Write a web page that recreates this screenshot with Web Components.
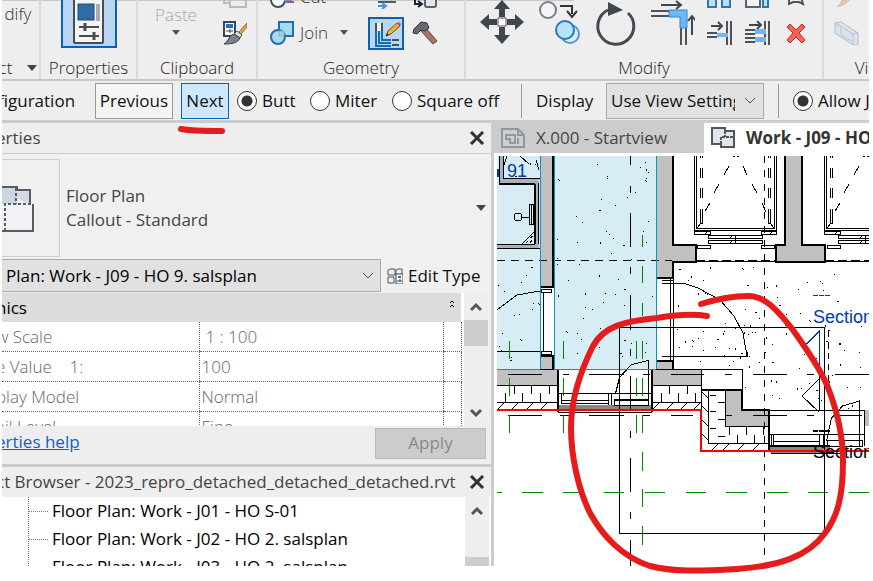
<!DOCTYPE html>
<html lang="en">
<head>
<meta charset="utf-8">
<title>Floor plan editor</title>
<style>
  body {
    margin: 0;
    background: #fff;
    color: #111;
    font-family: "Open Sans", "Noto Sans", sans-serif;
    font-size: 17px;
    line-height: 24px;
  }
</style>
</head>
<body>
<plan-app></plan-app>

<script>
const ICONS = {
  properties: [56, 48, `
    <rect x="1" y="-6" width="54" height="53" fill="#b9d6f3" stroke="#0a62b8" stroke-width="2"/>
    <rect x="13" y="-4" width="29" height="47" rx="1" fill="#f4f4f4" stroke="#474c52" stroke-width="2"/>
    <rect x="17" y="4" width="16" height="16" fill="#2e6ca8" stroke="#1d4c7f"/>
    <rect x="35" y="4" width="4" height="17" fill="#a9abb0"/>
    <path d="M18 27h20M18 36h20" stroke="#474c52" stroke-width="2"/>
    <path d="M24 23v8M33 32v8" stroke="#474c52" stroke-width="3"/>`],
  caret: [12, 8, `<path d="M1 1h10L6 7z" fill="#444"/>`],
  smallCaret: [8, 6, `<path d="M0 0h8L4 5z" fill="#555"/>`],
  clipCopy: [24, 24, `
    <path d="M1 1v17h6M7 5h16v17H7z" fill="none" stroke="#bbb" stroke-width="2"/>`],
  brush: [24, 24, `
    <rect x="1" y="1" width="11" height="14" fill="#fff" stroke="#33485f" stroke-width="2"/>
    <rect x="3" y="3" width="7" height="4" fill="#2a6db3"/>
    <path d="M3 10h7M7 8v4" stroke="#33485f"/>
    <path d="M24 2l-8 9 2 2 6-7z" fill="#e8a73c" stroke="#8a6a36"/>
    <path d="M14 10l5 4-2 3-6-4z" fill="#ddd" stroke="#555"/>
    <path d="M11 13l6 4c-2 5-8 6-16 6 5-3 5-9 10-10z" fill="#7b828b" stroke="#3d4248"/>`],
  cut: [24, 24, `
    <circle cx="8" cy="15" r="7" fill="#fff" stroke="#454c55" stroke-width="2"/>
    <path d="M16 17h8" stroke="#cf4949" stroke-width="2"/>
    <path d="M14 15h8" stroke="#4a9be6" stroke-width="2"/>`],
  join: [24, 24, `
    <rect x="9" y="1" width="14" height="14" fill="#a9d9ef" stroke="#1f6fb3" stroke-width="2"/>
    <circle cx="8" cy="16" r="7" fill="#a9d9ef" stroke="#1f6fb3" stroke-width="2"/>
    <path d="M9 10h5v5H9z" fill="#9fd0e6" stroke="#7eb4cf"/>`],
  wallTop: [24, 24, `
    <path d="M4 17h18" stroke="#525a63" stroke-width="2"/>
    <path d="M4 21h7M8 18l4 3-4 3" fill="none" stroke="#3d96ea" stroke-width="2"/>`],
  wallJoin: [36, 33, `
    <rect x="1" y="1" width="34" height="31" fill="#b9d6f3" stroke="#0a62b8" stroke-width="2"/>
    <path d="M8 6v8M14 6v8M24 23h7M24 28h7" stroke="#47515c" stroke-width="2"/>
    <path d="M9 6h4v8H9z" fill="#eee"/>
    <path d="M8 14v15h15M11 14v12h12M14 14v9h9" fill="none" stroke="#176bb8" stroke-width="2"/>
    <path d="M18 19l2-5 9-8 3 3-9 8z" fill="#f2ae32" stroke="#7c5318"/>
    <path d="M29 6l2-1 2 2-1 2z" fill="#ca595c"/>
    <path d="M18 19l1-3 2 2z" fill="#333"/>`],
  splitTop: [24, 24, `
    <rect x="12" y="8" width="11" height="14" rx="2" fill="#e0e8f0" stroke="#5a6470" stroke-width="2"/>
    <path d="M2 12v7h6M5 16l4 3-4 3" fill="none" stroke="#222" stroke-width="2"/>`],
  hammer: [26, 24, `
    <path d="M9 10l4-4 12 14-4 3z" fill="#a87466" stroke="#6b4339"/>
    <path d="M2 8l7-7 6 1 2 5-4 3-4-1-4 4-4-1z" fill="#646b73" stroke="#33383e"/>`],
  move: [46, 48, `
    <path d="M23 1l8 9h-5v8h-6v-8h-5zM23 45l8-9h-5v-8h-6v8h-5zM1 23l9-8v5h8v6h-8v5zM45 23l-9-8v5h-8v6h8v5z" fill="#3f464e"/>
    <rect x="19" y="19" width="8" height="8" fill="#fff" stroke="#555"/>`],
  copy: [44, 48, `
    <circle cx="11" cy="11" r="8" fill="#f5f5f8" stroke="#777f88" stroke-width="2"/>
    <path d="M23 7h12v8M30 12l5 6 5-6" fill="none" stroke="#30363c" stroke-width="2"/>
    <circle cx="33" cy="35" r="9" fill="#d7effb" stroke="#5594cf" stroke-width="2"/>
    <circle cx="28" cy="31" r="9" fill="#b8e2f7" stroke="#2877bb" stroke-width="2"/>`],
  rotate: [44, 48, `
    <path d="M35 14A18 18 0 1 1 15 11" fill="none" stroke="#454b52" stroke-width="3"/>
    <path d="M15 3l15 8-15 6z" fill="#3f464e"/>`],
  trim: [46, 48, `
    <path d="M12 6h20M27 2l5 4-5 4" fill="none" stroke="#3f464e" stroke-width="2"/>
    <path d="M2 12h18M2 17h18M32 29v17M37 29v17" stroke="#4b525a" stroke-width="2"/>
    <path d="M20 11h18v18h-7V18H20z" fill="#6db7f5" stroke="#3586cf"/>
    <path d="M43 36V17M39 22l4-5 4 5" fill="none" stroke="#3f464e" stroke-width="2"/>`],
  alignA: [26, 24, `
    <path d="M1 4h8v18H1zM15 4h8v18h-8z" fill="#bfe1f7" stroke="#2779bd" stroke-width="2"/>`],
  alignB: [26, 24, `
    <path d="M1 4h14v18H1z" fill="#eef2f6" stroke="#586572" stroke-width="2"/>
    <path d="M18 4h5v18h-5z" fill="#bfe1f7" stroke="#2779bd" stroke-width="2"/>`],
  pin: [26, 24, `<path d="M6 12v7l4-2h6l4 2-2-7" fill="none" stroke="#555" stroke-width="2"/>`],
  trimOne: [26, 24, `
    <path d="M4 5h11M11 1l4 4-4 4" fill="none" stroke="#3f464e" stroke-width="2"/>
    <path d="M0 12h10M0 16h10M20 0v24M24 0v24" stroke="#4b525a" stroke-width="2"/>
    <path d="M10 12h11v4H10z" fill="#6db7f5"/>`],
  trimMany: [26, 24, `
    <path d="M4 4h12M12 0l4 4-4 4" fill="none" stroke="#3f464e" stroke-width="2"/>
    <path d="M0 9h10M0 13h10M0 17h10M0 21h10M20 0v24M24 0v24" stroke="#4b525a" stroke-width="2"/>
    <path d="M10 8h11v5H10zM10 16h11v5H10z" fill="#6db7f5"/>`],
  remove: [26, 24, `
    <path d="M4 6l3-3 6 6 6-6 3 3-6 6 6 7-3 3-6-6-6 6-3-3 6-7z" fill="#ff6056" stroke="#b92b27"/>`],
  paintTop: [26, 24, `<path d="M2 22c7 0 13-4 15-10h-8c-2 4-3 7-7 10z" fill="#d8c5b4"/>`],
  box: [26, 24, `
    <path d="M1 2l6-1 17 11v11l-5 1L1 12z" fill="#dce4ea" stroke="#b5bcc2"/>
    <path d="M1 2l18 11v11M19 13l5-1M7 6v8l10 6" fill="none" stroke="#a9c3dc"/>`],
  close: [16, 14, `<path d="M2 1l12 12M14 1L2 13" stroke="#333" stroke-width="3"/>`],
  floorPlan: [36, 48, `
    <path d="M-4 3h19v3h13v15" fill="#d5dbe3" stroke="#555d66" stroke-width="2"/>
    <path d="M-4 4h18v16H-4z" fill="#ccd5df"/>
    <path d="M3 20h28v27H3z" fill="#f0f2f5"/>
    <path d="M31 20v27H-2" fill="none" stroke="#555d66" stroke-width="2"/>
    <path d="M14 4v16M3 47V20h28" fill="none" stroke="#555d66" stroke-width="2" stroke-dasharray="3 2"/>`],
  editType: [16, 16, `
    <path d="M1 2l2-1h5v6H1zM9 2l2-1h4v6H9zM1 9h6v6H1z" fill="#eee" stroke="#555"/>
    <rect x="9" y="6" width="7" height="10" fill="#fff" stroke="#33485f"/>
    <rect x="11" y="8" width="3" height="2" fill="#2a6db3"/>
    <path d="M10 13h5M13 11v3" stroke="#33485f"/>`],
  chevron: [12, 8, `<path d="M1 1l5 5 5-5" fill="none" stroke="#555"/>`],
  up: [12, 10, `<path d="M1 8l5-5 5 5" fill="none" stroke="#555" stroke-width="3"/>`],
  down: [12, 10, `<path d="M1 2l5 5 5-5" fill="none" stroke="#555" stroke-width="3"/>`],
  collapse: [6, 8, `<path d="M1 3l2-2 2 2M1 7l2-2 2 2" fill="none" stroke="#000"/>`],
  sheet: [24, 20, `
    <path d="M1 1h16l6 6v12H1z" fill="#ccd0d3" stroke="#92989c" stroke-width="2"/>
    <path d="M17 1v6h6M5 7h9v8h-5v-4H5zM17 10v6" fill="none" stroke="#92989c" stroke-width="2"/>`],
  planTab: [24, 22, `
    <path d="M1 1h13v3h9v16H10v-3H1z" fill="#e2e5e9" stroke="#50565d" stroke-width="2"/>
    <path d="M10 17v-7h13M14 4v6" fill="none" stroke="#50565d" stroke-width="2" stroke-dasharray="3 1"/>`],
};

class AppIcon extends HTMLElement {
  connectedCallback() {
    const [w, h, body] = ICONS[this.getAttribute('name')];
    this.attachShadow({ mode: 'open' }).innerHTML = `
      <style>
        :host { display: inline-flex; flex: none; }
        svg { display: block; }
      </style>
      <svg width="${w}" height="${h}" viewBox="0 0 ${w} ${h}" aria-hidden="true">${body}</svg>`;
  }
}

class RibbonPanel extends HTMLElement {
  connectedCallback() {
    this.attachShadow({ mode: 'open' }).innerHTML = `
      <style>
        :host {
          display: flex;
          flex-direction: column;
          box-sizing: border-box;
          border-right: 2px solid #dadada;
          overflow: hidden;
          font-weight: 300;
        }
        :host(:last-child) { border-right: 0; }
        .tools {
          display: flex;
          justify-content: center;
          align-items: flex-end;
          height: 51px;
          flex: none;
        }
        .title {
          padding-top: 5px;
          height: 23px;
          line-height: 23px;
          text-align: center;
          white-space: nowrap;
          color: #222;
        }
      </style>
      <div class="tools"><slot></slot></div>
      <div class="title"><slot name="title"></slot></div>`;
  }
}

class RibbonBar extends HTMLElement {
  connectedCallback() {
    this.attachShadow({ mode: 'open' }).innerHTML = `
      <style>
        :host {
          display: grid;
          grid-template-columns: 39px 97px 120px 208px 358px 1fr;
          background: linear-gradient(#c8c8c8, #c8c8c8) 0 0 / 66% 1px no-repeat #eee;
          border-bottom: 2px solid #c8c8c8;
          overflow: hidden;
        }
        button {
          display: flex;
          align-items: center;
          padding: 0;
          border: 0;
          background: none;
          font: inherit;
          color: #333;
          line-height: 20px;
        }
        .stack { display: flex; flex-direction: column; justify-content: flex-end; }
        .stack > * { height: 36px; }
        .row { display: flex; align-items: center; }
        .wide { width: 90px; gap: 6px; }
        .drop { margin-left: 6px; }
        .first { align-self: flex-start; width: 32px; margin-top: 4px; }
        .big { height: 48px; margin-bottom: 3px; }
        .modify .big { margin-bottom: 4px; }
        .paste { align-self: flex-end; flex-direction: column; color: #aaa; gap: 5px; margin-bottom: 15px; }
        .clip { gap: 26px; padding-left: 8px; }
        .modify { gap: 12px; display: flex; align-items: flex-end; }
        .small { display: grid; grid-template-columns: repeat(3, 26px); grid-auto-rows: 36px; column-gap: 12px; }
        .title-row { display: inline-flex; align-items: center; gap: 14px; text-indent: -4px; }
        .geo { gap: 8px; padding-right: 14px; }
        .cell { width: 36px; justify-content: center; }
        .geo .cell:last-child { width: 26px; }
        .view { padding-left: 30px; }
      </style>
      <ribbon-panel>
        <button class="first">dify</button>
        <span slot="title" class="title-row">ct <app-icon name="caret"></app-icon></span>
      </ribbon-panel>
      <ribbon-panel>
        <button class="big" aria-label="Properties"><app-icon name="properties"></app-icon></button>
        <span slot="title">Properties</span>
      </ribbon-panel>
      <ribbon-panel>
        <div class="row clip">
          <button class="paste">Paste <app-icon name="smallCaret"></app-icon></button>
          <div class="stack">
            <button aria-label="Copy to clipboard"><app-icon name="clipCopy"></app-icon></button>
            <button aria-label="Match type"><app-icon name="brush"></app-icon></button>
          </div>
        </div>
        <span slot="title">Clipboard</span>
      </ribbon-panel>
      <ribbon-panel>
        <div class="stack">
          <div class="row geo">
            <button class="wide"><app-icon name="cut"></app-icon> Cut</button>
            <button class="cell" aria-label="Wall opening"><app-icon name="wallTop"></app-icon></button>
            <button class="cell" aria-label="Split"><app-icon name="splitTop"></app-icon></button>
          </div>
          <div class="row geo">
            <button class="wide"><app-icon name="join"></app-icon> Join <app-icon class="drop" name="smallCaret"></app-icon></button>
            <button class="cell" aria-label="Wall joins"><app-icon name="wallJoin"></app-icon></button>
            <button class="cell" aria-label="Demolish"><app-icon name="hammer"></app-icon></button>
          </div>
        </div>
        <span slot="title">Geometry</span>
      </ribbon-panel>
      <ribbon-panel>
        <div class="modify">
          <button class="big" aria-label="Move"><app-icon name="move"></app-icon></button>
          <button class="big" aria-label="Copy"><app-icon name="copy"></app-icon></button>
          <button class="big" aria-label="Rotate"><app-icon name="rotate"></app-icon></button>
          <button class="big" aria-label="Trim to corner"><app-icon name="trim"></app-icon></button>
          <div class="small">
            <button aria-label="Mirror"><app-icon name="alignA"></app-icon></button>
            <button aria-label="Array"><app-icon name="alignB"></app-icon></button>
            <button aria-label="Pin"><app-icon name="pin"></app-icon></button>
            <button aria-label="Trim single"><app-icon name="trimOne"></app-icon></button>
            <button aria-label="Trim multiple"><app-icon name="trimMany"></app-icon></button>
            <button aria-label="Delete"><app-icon name="remove"></app-icon></button>
          </div>
        </div>
        <span slot="title">Modify</span>
      </ribbon-panel>
      <ribbon-panel>
        <div class="stack">
          <button aria-label="Paint"><app-icon name="paintTop"></app-icon></button>
          <button aria-label="Section box"><app-icon name="box"></app-icon></button>
        </div>
        <span slot="title" class="view">Vi</span>
      </ribbon-panel>`;
  }
}

class OptionsBar extends HTMLElement {
  connectedCallback() {
    this.attachShadow({ mode: 'open' }).innerHTML = `
      <style>
        :host {
          display: flex;
          align-items: center;
          height: 39px;
          background: #eee;
          border-bottom: 3px solid #ccc;
          white-space: nowrap;
          overflow: hidden;
        }
        .config { width: 93px; flex: none; text-indent: -4px; }
        button {
          height: 36px;
          padding: 0;
          font: inherit;
          background: #f5f5f5;
          border: 1px solid #999;
          color: #111;
        }
        .prev { width: 78px; margin-right: 8px; flex: none; }
        .next { width: 48px; margin-right: 8px; flex: none; background: #cce8fb; border-color: #0a62b8; }
        label { display: flex; align-items: center; gap: 5px; flex: none; }
        .butt { width: 73px; }
        .miter { width: 82px; }
        .square { width: 129px; }
        input {
          appearance: none;
          box-sizing: border-box;
          width: 20px;
          height: 20px;
          margin: 0;
          flex: none;
          border: 1px solid #333;
          border-radius: 50%;
          background: #fff;
        }
        input:checked { background: radial-gradient(circle, #333 5px, #fff 6px); }
        .rule { width: 1px; height: 34px; background: #999; margin-right: 14px; flex: none; }
        .display { width: 70px; }
        .combo { position: relative; width: 158px; margin-right: 14px; flex: none; }
        select {
          appearance: none;
          width: 158px;
          height: 36px;
          padding: 0 28px 0 4px;
          border: 1px solid #aaa;
          border-radius: 0;
          background: #e1e1e1;
          color: #111;
          font: inherit;
        }
        .combo app-icon { position: absolute; right: 8px; top: 14px; pointer-events: none; }
      </style>
      <span class="config">figuration</span>
      <button class="prev">Previous</button>
      <button class="next">Next</button>
      <label class="butt"><input type="radio" name="end" checked>Butt</label>
      <label class="miter"><input type="radio" name="end">Miter</label>
      <label class="square"><input type="radio" name="end">Square off</label>
      <span class="rule"></span>
      <label class="display" for="display">Display</label>
      <span class="combo">
        <select id="display"><option>Use View Settings</option></select>
        <app-icon name="chevron"></app-icon>
      </span>
      <span class="rule"></span>
      <label><input type="radio" name="allow" checked>Allow J</label>`;
  }
}

class PanelHeader extends HTMLElement {
  connectedCallback() {
    this.attachShadow({ mode: 'open' }).innerHTML = `
      <style>
        :host {
          display: flex;
          align-items: center;
          justify-content: space-between;
          height: 30px;
          padding-right: 6px;
          background: #eee;
          color: #444;
          white-space: nowrap;
          text-indent: -6px;
        }
        button { padding: 0; border: 0; background: none; display: flex; }
      </style>
      <slot></slot>
      <button aria-label="Close"><app-icon name="close"></app-icon></button>`;
  }
}

class ScrollStrip extends HTMLElement {
  connectedCallback() {
    this.attachShadow({ mode: 'open' }).innerHTML = `
      <style>
        :host {
          display: flex;
          flex-direction: column;
          align-items: center;
          width: 24px;
          background: #eee;
          flex: none;
        }
        app-icon { height: 10px; padding: 9px 0 8px; }
        .thumb { width: 24px; height: 26px; background: #cdcdcd; }
        .space { flex: 1; }
        :host([low]) .thumb { order: 3; height: 9px; }
        :host([low]) .down { display: none; }
      </style>
      <app-icon name="up"></app-icon>
      <div class="thumb"></div>
      <div class="space"></div>
      <app-icon class="down" name="down"></app-icon>`;
  }
}

class PropertiesPanel extends HTMLElement {
  connectedCallback() {
    this.attachShadow({ mode: 'open' }).innerHTML = `
      <style>
        :host { display: block; background: #f0f0f0; }
        .type {
          display: flex;
          align-items: center;
          height: 100px;
          padding-top: 4px;
          border-top: 1px solid #ccc;
          color: #444;
        }
        .thumb {
          display: flex;
          align-items: center;
          width: 57px;
          height: 96px;
          border: 1px solid #ccc;
          border-left: 0;
          margin-right: 6px;
        }
        .type p { margin: 0; flex: 1; }
        .type > button { margin-right: 4px; }
        button { padding: 0; border: 0; background: none; font: inherit; color: #111; display: flex; align-items: center; }
        .filter { display: flex; align-items: center; height: 35px; white-space: nowrap; }
        .combo { position: relative; width: 379px; flex: none; }
        select {
          appearance: none;
          display: block;
          width: 100%;
          height: 33px;
          border: 1px solid #aaa;
          border-left: 0;
          border-radius: 0;
          background: #e1e1e1;
          color: #000;
          padding: 0 4px;
          font: inherit;
        }
        .combo app-icon { position: absolute; right: 7px; top: 13px; pointer-events: none; }
        .edit { gap: 5px; margin-left: 6px; }
        .grid { display: flex; height: 133px; overflow: hidden; padding-right: 3px; }
        .scroller { flex: 1; overflow: hidden; background: #fff; }
        table { width: 459px; border-collapse: collapse; table-layout: fixed; color: #666; font-weight: 300; }
        th, td { height: 29px; padding: 0 2px; text-align: left; font-weight: inherit; border-bottom: 1px dotted #666; line-height: 20px; }
        td { border-left: 1px dotted #666; }
        th { padding-left: 0; text-indent: -6px; }
        td:last-child { border-right: 1px dotted #666; }
        thead th { background: #dcdcdc; color: #000; font-weight: 400; border: 0; height: 29px; }
        thead div { display: flex; justify-content: space-between; padding-right: 4px; }
        thead app-icon { margin-top: 2px; }
        td.indent { padding-left: 6px; }
        .foot { display: flex; align-items: center; justify-content: space-between; height: 38px; padding-right: 5px; background: #eee; }
        a { color: #0a62cc; margin-bottom: 6px; text-indent: -6px; }
        .apply { width: 111px; height: 31px; margin-bottom: 4px; justify-content: center; border: 1px solid #bbb; background: #ccc; color: #888; }
      </style>
      <panel-header>erties</panel-header>
      <div class="type">
        <span class="thumb"><app-icon name="floorPlan"></app-icon></span>
        <p>Floor Plan<br>Callout - Standard</p>
        <button aria-label="Choose type"><app-icon name="caret"></app-icon></button>
      </div>
      <div class="filter">
        <span class="combo">
          <select aria-label="View"><option>Plan: Work - J09 - HO 9. salsplan</option></select>
          <app-icon name="chevron"></app-icon>
        </span>
        <button class="edit"><app-icon name="editType"></app-icon>Edit Type</button>
      </div>
      <div class="grid">
        <div class="scroller">
          <table>
            <colgroup><col style="width: 197px"><col style="width: 244px"><col style="width: 18px"></colgroup>
            <thead><tr><th colspan="3"><div>nics <app-icon name="collapse"></app-icon></div></th></tr></thead>
            <tbody>
              <tr><th>w Scale</th><td class="indent">1 : 100</td><td></td></tr>
              <tr><th>e Value &nbsp;&nbsp; 1:</th><td>100</td><td></td></tr>
              <tr><th>play Model</th><td>Normal</td><td></td></tr>
              <tr><th>ail Level</th><td>Fine</td><td></td></tr>
            </tbody>
          </table>
        </div>
        <scroll-strip></scroll-strip>
      </div>
      <div class="foot">
        <a href="#help">erties help</a>
        <button class="apply" disabled>Apply</button>
      </div>`;
  }
}

class ProjectBrowser extends HTMLElement {
  connectedCallback() {
    this.attachShadow({ mode: 'open' }).innerHTML = `
      <style>
        :host { display: block; border-top: 3px solid #ccc; }
        .view { display: flex; height: 69px; overflow: hidden; background: #fff; padding-right: 2px; }
        ul { flex: 1; margin: 0 0 0 26px; padding: 0; list-style: none; border-left: 1px dotted #777; color: #000; }
        li { display: flex; align-items: center; gap: 4px; height: 28px; white-space: nowrap; }
        li::before { content: ""; width: 19px; border-top: 1px dotted #777; }
      </style>
      <panel-header>ct Browser - 2023_repro_detached_detached_detached.rvt</panel-header>
      <div class="view">
        <ul>
          <li>Floor Plan: Work - J01 - HO S-01</li>
          <li>Floor Plan: Work - J02 - HO 2. salsplan</li>
          <li>Floor Plan: Work - J03 - HO 2. salsplan</li>
        </ul>
        <scroll-strip low></scroll-strip>
      </div>`;
  }
}

class ViewTabs extends HTMLElement {
  connectedCallback() {
    this.attachShadow({ mode: 'open' }).innerHTML = `
      <style>
        :host { display: flex; height: 30px; background: #ccc; overflow: hidden; }
        button {
          display: flex;
          align-items: center;
          gap: 11px;
          flex: none;
          padding: 0 7px;
          border: 0;
          background: none;
          color: #444;
          font: inherit;
          white-space: nowrap;
        }
        .idle { width: 210px; }
        .active { background: #fff; color: #333; font-weight: 700; width: 300px; }
      </style>
      <button class="idle"><app-icon name="sheet"></app-icon>X.000 - Startview</button>
      <button class="active"><app-icon name="planTab"></app-icon>Work - J09 - HO</button>`;
  }
}

class PlanCanvas extends HTMLElement {
  // concrete/floor speckle, seeded so it is the same each time
  speckle(x, y, w, h, count) {
    let seed = x * 31 + y;
    const next = () => (seed = (seed * 16807) % 2147483647) / 2147483647;
    let d = '';
    next();
    for (let i = 0; i < count; i++) {
      const px = Math.round(x + next() * w);
      const py = Math.round(y + next() * h);
      const dx = Math.round(next() * 3) - 1;
      const dy = Math.round(next() * 2);
      d += `M${px} ${py}l${dx || 1} ${dy}`;
    }
    return d;
  }

  // vertical or horizontal broken line from explicit start/end pairs
  dashes(axis, at, pairs) {
    return pairs.map(([a, b]) => axis === 'v' ? `M${at} ${a}V${b}` : `M${a} ${at}H${b}`).join('');
  }

  lift() {
    return `
      <path d="M694.5 156V230.5H776.5V156M696.5 156V228H774.5V156"/>
      <path d="M700.5 156v2M702.5 156v2M768.5 156v2M770.5 156v2M700.5 168v10M702.5 168v10M700.5 188v10M702.5 188v10M700.5 209v14h2v-14M768.5 168v10M770.5 168v10M768.5 188v10M770.5 188v10M768.5 209v14h2v-14M697 228l4-5M774 228l-4-5"/>
      <path d="M729 166l-5 9M719 184l-5 9M710 203l-5 8M743 166l4 9M752 184l5 9M762 203l4 9M733 157l2-1M739 157l-2-1"/>
      <path d="M694.5 231.5h16v3h-16zM761.5 231.5h15v3h-15zM708.5 235.5h54v3h-54zM708.5 240.5h54v3h-54zM735.5 235v8M697.5 245.5h13v3h-13zM761.5 245.5h13v3h-13zM705 234l3-3M770 234l3-3M730 238l3-3M730 243l3-3"/>`;
  }

  connectedCallback() {
    const vGreen = [[341, 359], [378, 396], [415, 433]];
    this.attachShadow({ mode: 'open' }).innerHTML = `
      <style>
        :host { display: block; padding: 3px 0 0 3px; background: #fff; overflow: hidden; }
        svg { display: block; width: 100%; height: 410px; }
        text { font: 18px "Liberation Sans", Arial, sans-serif; }
      </style>
      <svg viewBox="497 156 372 410" preserveAspectRatio="xMinYMin slice" shape-rendering="crispEdges" fill="none" stroke="#000">
        <g stroke="none">
          <path d="M497 156h159v213H497z" fill="#d7edf6"/>
          <path d="M541 288h13v68h-13z" fill="#fff"/>
          <path d="M499 156h5v23h35v69h-42v-4h38v-60h-36z" fill="#a3b5ba"/>
          <g fill="#c0c0c0">
            <path d="M541 156h13v130h-13zM541 356h13v13h-13zM657 156h16v89h23v17h-23v16h-16zM657 361h16v8h-16z"/>
            <path d="M785 156h17v89h23v17h-49v-17h9zM497 370h61v15h-61zM652 370h49v15h-49zM726 390h16v20h27v16h-43zM864 410h5v16h-5z"/>
          </g>
          <path d="M558 405h94v6h-94zM770 446h60v7h-60z" fill="#888"/>
        </g>

        <path d="${this.speckle(556, 160, 98, 204, 60)}${this.speckle(498, 264, 40, 100, 16)}${this.speckle(676, 265, 190, 95, 76)}${this.speckle(745, 360, 122, 48, 26)}${this.speckle(676, 345, 60, 20, 6)}${this.speckle(508, 158, 30, 18, 5)}"/>

        <!-- bathroom and left door -->
        <path d="M499.5 156v27.5h35V244.5H497M503.5 156v22.5H540M497 248.5h43M538.5 183v61"/>
        <path d="M534.5 184v60M499 183.5h36" stroke-width="2"/>
        <circle cx="518" cy="217" r="4"/>
        <path d="M522 217h8M529.5 204.5h4v20h-4zM531.5 204v20M522 244l12-12M526 243l2-2M530 243l2-3M530 238l3-2M507 156l-3 9M520 156l9 8M536 160l3 10"/>
        <path d="M497 310l20-15 23-4M497 351.5h44M541 289.5h10v3h-10zM543.5 292v59M541 351.5h10v3h-10z"/>
        <path d="M540 287h14M553 156v131M540 356h14M553 356v13" stroke-width="2"/>

        <!-- shaft walls and lifts -->
        <path d="M673 156v89h23v17h-23v16h-17M785 156v89h-9v17h49v-17h-23v-89M656 361h17v8M742 390v20h27v40M701 390h41M558 369v43M652 369v43" stroke-width="2"/>
        ${this.lift()}
        <g transform="translate(130 0)">${this.lift()}</g>
        <path d="M696 260.5h80M825 260.5h44" stroke-dasharray="9 4"/>
        <path d="M673 261.5h196"/>
        <path d="M497 260.5h175" stroke-dasharray="8 6"/>
        <path d="M662 280.5h11M662 283.5h18M670.5 279v82M673.5 279v82M662 356.5h85v-5M671 283l12 0 15 5 22 12 14 16 9 17 4 23"/>

        <!-- lower facade -->
        <path d="M497 385.5h61M652 385.5h49M497 402.5h61M652 402.5h49M497 369.5h61M656 369.5h86v21M701.5 369v42M708.5 390v53M725.5 390v36M708 443.5h61M725 426.5h44"/>
        <path d="M505.5 393v9M514.5 386v8M522.5 393v9M531.5 386v8M540.5 393v9M549.5 386v8M661.5 393v9M669.5 386v8M678.5 393v9M687.5 386v8M695.5 393v9"/>
        <path d="M498 409l6-6M512 409l6-6M527 409l6-6M541 409l6-6M653 409l6-6M667 409l6-6M681 409l6-6M694 409l6-6M702 392l6 6M702 406l6 6M702 420l6 6M702 434l6 6M712 450l6-6M723 450l6-6M738 450l6-6M753 450l6-6"/>
        <path d="M710 395.5h6M718 402.5h7M710 411.5h6M718 419.5h7M710 428.5h6M718 436.5h7M729.5 427v8M737.5 435v8M746.5 427v8M754.5 435v8M763.5 427v8"/>
        <path d="M558 393.5h94M561.5 393v11M608.5 393v12M611.5 393v12M562 400.5h46M562 403.5h46M614.5 399.5h34v6h-34zM648.5 405V360.5l-17 4-12 13-4 16M558 412.5h94"/>
        <path d="M614 400h34M769 446h61" stroke-width="2"/>
        <path d="M769 410.5h95M769 434.5h95M771.5 434v12M773.5 434v12M819.5 434v12M823.5 434v12M773 441.5h46M827 440.5h35v6h-35zM859.5 446v-45l-17 5-11 12-5 23M864.5 410v36M771 453.5h70"/>

        <!-- grid and centre lines -->
        <path d="${this.dashes('v', 630.5, [[156, 165], [186, 193], [213, 247], [267, 274], [295, 330], [349, 356], [376, 410], [431, 438], [458, 492], [512, 519], [540, 566]])}${this.dashes('h', 374.5, [[508, 542], [563, 569], [589, 624], [643, 650], [671, 704], [725, 732], [753, 787], [807, 814], [835, 869]])}${this.dashes('h', 415.5, [[508, 542], [560, 569], [589, 624], [643, 650], [671, 693], [725, 732], [753, 787], [807, 814], [835, 862]])}"/>
        <path d="M764.5 156V559" stroke-dasharray="7 7"/>
        <path d="M828.5 331v64" stroke-dasharray="6 5"/>
        <path stroke="#080" d="${this.dashes('v', 642.5, [[235, 247], [266, 283], [303, 316], ...vGreen, [452, 471], [489, 507], [526, 545]])}${this.dashes('v', 509.5, vGreen)}${this.dashes('v', 563.5, vGreen)}${this.dashes('v', 636.5, vGreen)}${this.dashes('h', 492.5, [[497, 502], [522, 543], [563, 580], [604, 624], [645, 665], [686, 706], [726, 747], [767, 788], [808, 828], [849, 869]])}"/>
        <path d="M540.5 156v213M554.5 156v213M656.5 156v213M497 369.5h43M554 369.5h102" stroke="#0b93c9"/>

        <!-- section and callout -->
        <path d="M619.5 327.5h205v206h-205zM819.5 365v46M819 379l-17 17 17 16"/>
        <path d="M819.5 365v-34l-13 13" stroke="#0038b8"/>
        <path d="M813 295.5h18" stroke="#0038b8" stroke-dasharray="5 1"/>
        <path d="M813 431h18" stroke-width="2" stroke-dasharray="5 1"/>
        <path d="M497 410h204v41h168" stroke="#f00" stroke-width="2"/>
        <g stroke="none">
          <text x="507" y="177" fill="#0038b8">91</text>
          <path d="M497 169h2v8h-2z" fill="#0038b8"/>
          <text x="813" y="323" fill="#0038b8">Section</text>
          <text x="813" y="458" fill="#000">Section</text>
        </g>
      </svg>`;
  }
}

class MarkupLayer extends HTMLElement {
  connectedCallback() {
    this.attachShadow({ mode: 'open' }).innerHTML = `
      <style>
        :host { position: absolute; top: 0; left: 0; pointer-events: none; }
        svg { display: block; }
      </style>
      <svg width="869" height="580" fill="none" stroke="#e61c1c" stroke-width="6" stroke-linecap="round" stroke-linejoin="round" aria-hidden="true">
        <path d="M181 129C192 131 206 131 222 131"/>
        <path d="M701 304C717 299 732 296 748 296C764 296 776 308 793 330C803 344 818 365 827 385C837 410 843 438 843 461C843 495 838 516 825 533C808 557 778 566 737 569C700 571 672 572 650 566C622 557 602 535 590 513C578 489 571 455 571 428C571 400 580 372 593 346C604 326 625 321 657 318C675 315 694 314 707 316"/>
      </svg>`;
  }
}

class PlanApp extends HTMLElement {
  connectedCallback() {
    this.attachShadow({ mode: 'open' }).innerHTML = `
      <style>
        :host { display: block; position: relative; padding: 0 4px 15px 2px; overflow: hidden; }
        .main { display: grid; grid-template-columns: 492px 1fr; }
        aside { border-right: 3px solid #ccc; min-width: 0; overflow: hidden; }
        main { min-width: 0; }
      </style>
      <ribbon-bar></ribbon-bar>
      <options-bar></options-bar>
      <div class="main">
        <aside>
          <properties-panel></properties-panel>
          <project-browser></project-browser>
        </aside>
        <main>
          <view-tabs></view-tabs>
          <plan-canvas></plan-canvas>
        </main>
      </div>
      <markup-layer></markup-layer>`;
  }
}

customElements.define('app-icon', AppIcon);
customElements.define('ribbon-panel', RibbonPanel);
customElements.define('ribbon-bar', RibbonBar);
customElements.define('options-bar', OptionsBar);
customElements.define('panel-header', PanelHeader);
customElements.define('scroll-strip', ScrollStrip);
customElements.define('properties-panel', PropertiesPanel);
customElements.define('project-browser', ProjectBrowser);
customElements.define('view-tabs', ViewTabs);
customElements.define('plan-canvas', PlanCanvas);
customElements.define('markup-layer', MarkupLayer);
customElements.define('plan-app', PlanApp);
</script>
</body>
</html>
